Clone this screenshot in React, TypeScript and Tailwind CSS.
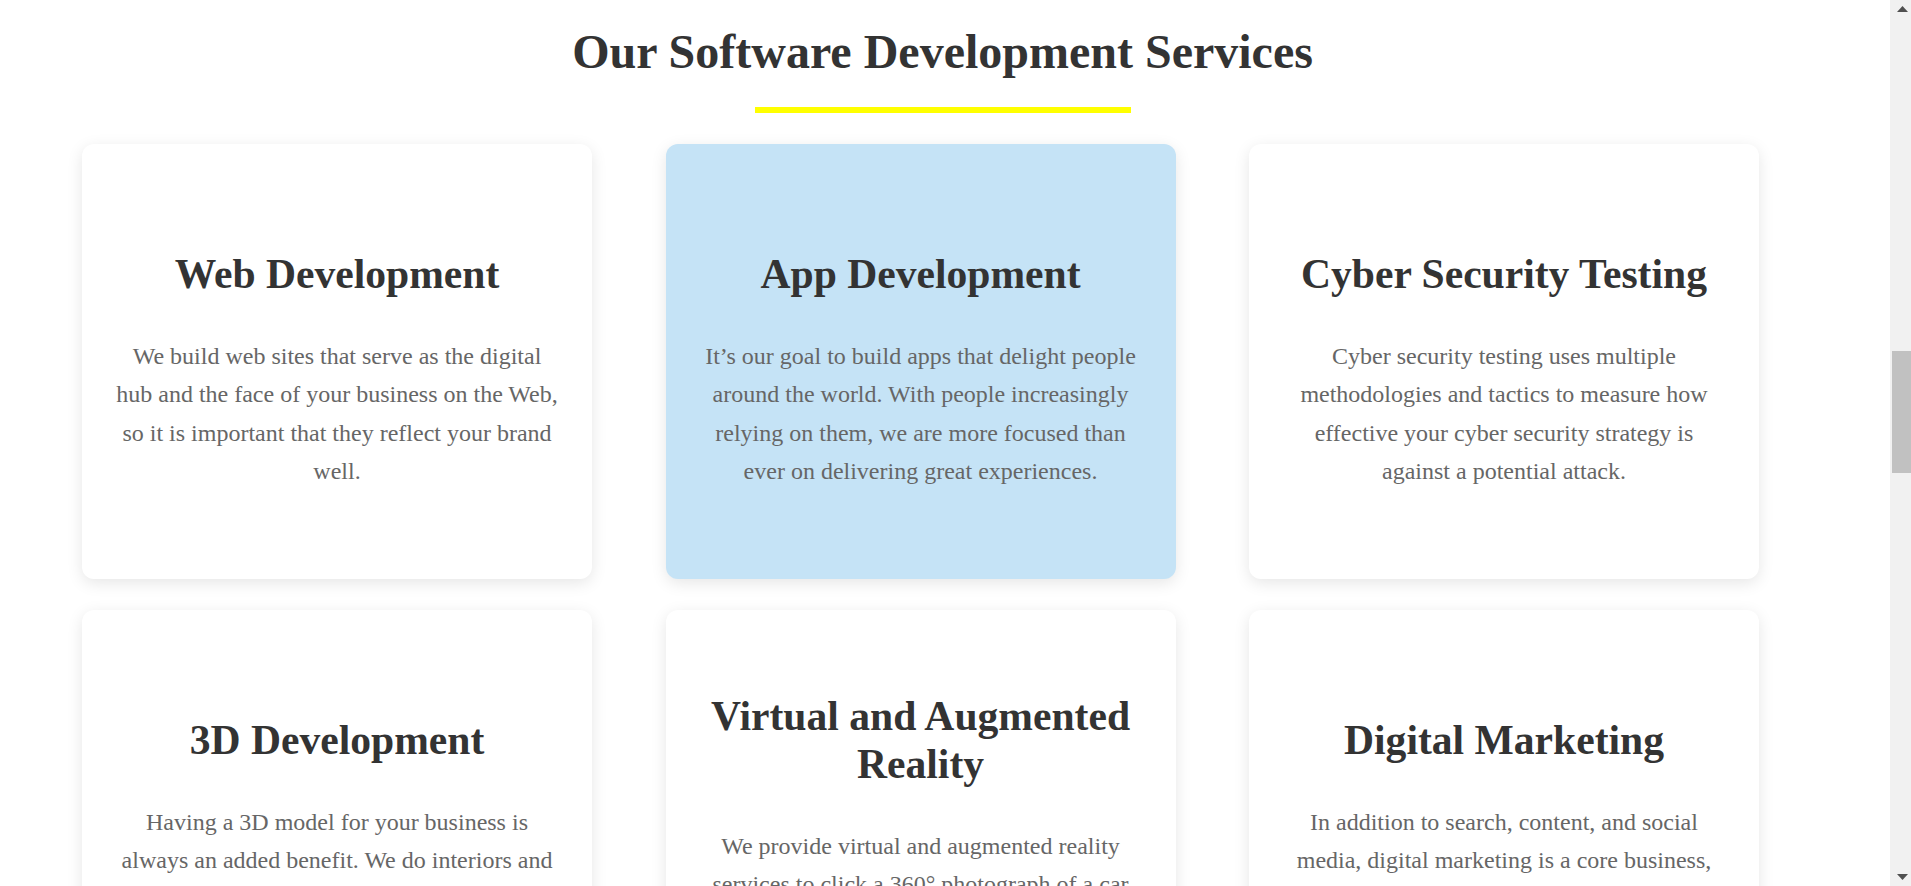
const services = [
  {
    title: 'Web Development',
    text: 'We build web sites that serve as the digital hub and the face of your business on the Web, so it is important that they reflect your brand well.',
  },
  {
    title: 'App Development',
    text: 'It’s our goal to build apps that delight people around the world. With people increasingly relying on them, we are more focused than ever on delivering great experiences.',
    active: true,
  },
  {
    title: 'Cyber Security Testing',
    text: 'Cyber security testing uses multiple methodologies and tactics to measure how effective your cyber security strategy is against a potential attack.',
  },
  {
    title: '3D Development',
    text: 'Having a 3D model for your business is always an added benefit. We do interiors and exteriors for homes, offices and commercial spaces.',
  },
  {
    title: 'Virtual and Augmented Reality',
    text: 'We provide virtual and augmented reality services to click a 360° photograph of a car and let your customers explore every angle of it in full detail.',
  },
  {
    title: 'Digital Marketing',
    text: 'In addition to search, content, and social media, digital marketing is a core business, helping you reach and engage more customers online.',
  },
];

function Scrollbar() {
  return (
    <div className="flex w-[21px] shrink-0 flex-col items-center bg-[#f1f1f1]">
      <svg width="11" height="6" viewBox="0 0 11 6" className="mt-[6px] ml-[3px]">
        <polygon points="5.5,0 11,6 0,6" fill="#505050" />
      </svg>
      <div className="mt-[339px] ml-[2px] h-[122px] w-[19px] bg-[#c1c1c1]" />
      <div className="flex-1" />
      <svg width="11" height="6" viewBox="0 0 11 6" className="mb-[6px] ml-[3px]">
        <polygon points="0,0 11,0 5.5,6" fill="#505050" />
      </svg>
    </div>
  );
}

export default function App() {
  return (
    <div className="flex h-[886px] overflow-hidden bg-white font-['Liberation_Serif','Times_New_Roman',serif]">
      <main className="flex-1">
        <div className="pr-[5px]">
          <h1 className="pt-[24px] text-center text-[48px] font-bold leading-[55px] text-[#333333]">
            Our Software Development Services
          </h1>
          <div className="mx-auto mt-[28px] h-[6px] w-[376px] bg-[#ffff00]" />
        </div>

        <div className="mt-[31px] grid grid-cols-[repeat(3,510px)] gap-x-[73.5px] gap-y-[31px] pl-[82px]">
          {services.map((item) => (
            <div
              key={item.title}
              className={
                item.active
                  ? 'flex h-[435px] flex-col justify-center rounded-[12px] bg-[#c5e3f6] px-[31px] pt-[17.5px] text-center shadow-[0_4px_16px_rgba(0,0,0,0.1)]'
                  : 'flex h-[435px] flex-col justify-center rounded-[12px] bg-white px-[31px] pt-[17.5px] text-center shadow-[0_4px_16px_rgba(0,0,0,0.1)]'
              }
            >
              <h2 className="text-[41.6px] font-bold leading-[48px] text-[#333333]">{item.title}</h2>
              <p className="mt-[38.5px] text-[24px] leading-[38.5px] text-[#666666]">{item.text}</p>
            </div>
          ))}
        </div>
      </main>
      <Scrollbar />
    </div>
  );
}
